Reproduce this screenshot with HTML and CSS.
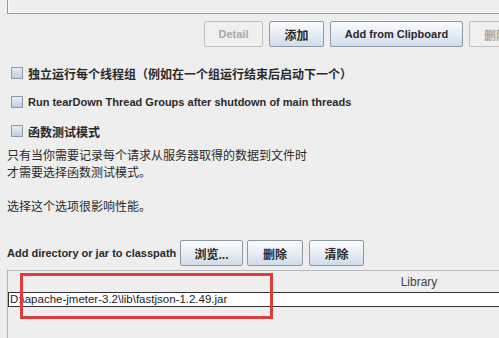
FILE: index.html
```html
<!DOCTYPE html>
<html>
<head>
<meta charset="utf-8">
<link rel="stylesheet" href="styles.css">
</head>
<body>
<div class="page">
  <div class="topbox"></div>
  <div class="btnrow">
    <span class="btn disabled w-detail en">Detail</span>
    <span class="btn w-add">添加</span>
    <span class="btn w-clip en">Add from Clipboard</span>
    <span class="btn disabled w-del">删除</span>
  </div>
  <div class="checks">
    <label class="check"><span class="box"></span><span class="lbl">独立运行每个线程组（例如在一个组运行结束后启动下一个）</span></label>
    <label class="check"><span class="box"></span><span class="lbl en">Run tearDown Thread Groups after shutdown of main threads</span></label>
    <label class="check"><span class="box"></span><span class="lbl">函数测试模式</span></label>
  </div>
  <div class="note">
    <div>只有当你需要记录每个请求从服务器取得的数据到文件时</div>
    <div>才需要选择函数测试模式。</div>
    <div>&nbsp;</div>
    <div>选择这个选项很影响性能。</div>
  </div>
  <div class="cprow">
    <span class="cplabel en">Add directory or jar to classpath</span>
    <span class="btn w-browse">浏览...</span>
    <span class="btn w-del2">删除</span>
    <span class="btn w-clear">清除</span>
  </div>
  <div class="table">
    <div class="thead"><span class="th">Library</span></div>
    <div class="row">D:\apache-jmeter-3.2\lib\fastjson-1.2.49.jar</div>
    <div class="redbox"></div>
  </div>
</div>
</body>
</html>
```
FILE: styles.css
```css
html, body {
  margin: 0;
  padding: 0;
  background: #eeeeee;
  width: 499px;
  height: 338px;
  overflow: hidden;
}
.page {
  font-family: "Liberation Sans", Arial, "Noto Sans CJK SC", sans-serif;
  font-size: 12px;
  color: #2a2a2a;
  position: relative;
  width: 499px;
  overflow: hidden;
}
.en { font-size: 11px; }
.topbox {
  margin-left: 7px;
  height: 13px;
  border-left: 1px solid #9a9a9a;
  border-bottom: 1px solid #9a9a9a;
  box-shadow: inset 1px -1px 0 #f8f8f8;
}
.btnrow {
  display: flex;
  gap: 6px;
  margin-top: 7px;
  padding-left: 204px;
  width: 600px;
}
.btn {
  box-sizing: border-box;
  height: 26px;
  display: flex;
  align-items: center;
  justify-content: center;
  border: 1px solid #8e99a6;
  border-radius: 2px;
  background: linear-gradient(#fbfcfd, #e6edf5 50%, #d0dce9);
  font-weight: bold;
  color: #2a2a2a;
  flex: none;
  white-space: nowrap;
}
.btn.disabled {
  background: #efefef;
  border-color: #c0c0c0;
  color: #a8a8a8;
}
.w-detail { width: 59px; }
.w-add { width: 55px; }
.w-clip { width: 133px; }
.w-del { width: 60px; justify-content: flex-start; padding-left: 14px; }
.checks {
  display: flex;
  flex-direction: column;
  gap: 17px;
  margin-top: 20px;
  padding-left: 11px;
}
.check {
  display: flex;
  align-items: center;
  gap: 5px;
  height: 12px;
  font-weight: bold;
  white-space: nowrap;
}
.box {
  box-sizing: border-box;
  width: 12px;
  height: 12px;
  border: 1px solid #8c9bab;
  background: linear-gradient(#e6edf4, #bfcfe0);
  flex: none;
}
.note {
  margin-top: 11px;
  padding-left: 7px;
  line-height: 17px;
}
.cprow {
  display: flex;
  align-items: center;
  margin-top: 24px;
  padding-left: 7px;
  gap: 5px;
}
.cplabel {
  font-weight: bold;
  width: 168px;
  white-space: nowrap;
}
.w-browse { width: 63px; }
.w-del2 { width: 56px; margin-left: -1px; }
.w-clear { width: 55px; margin-left: 1px; }
.table {
  position: relative;
  margin-top: 4px;
  margin-left: 7px;
  width: 822px;
  height: 80px;
  border-left: 1px solid #b4b4b4;
  border-top: 1px solid #b8bcc0;
}
.thead {
  height: 21px;
  display: flex;
  align-items: center;
  justify-content: center;
  color: #444;
}
.th { font-size: 12px; }
.row {
  box-sizing: border-box;
  height: 15px;
  background: #fff;
  border: 1px solid #333;
  border-width: 1px 0 1px 1px;
  line-height: 13px;
  padding-left: 1px;
  font-size: 11.5px;
  color: #222;
  white-space: nowrap;
}
.redbox {
  position: absolute;
  left: 12px;
  top: 2px;
  width: 253px;
  height: 46px;
  border: 3px solid #e03c3c;
  box-sizing: border-box;
}
```
